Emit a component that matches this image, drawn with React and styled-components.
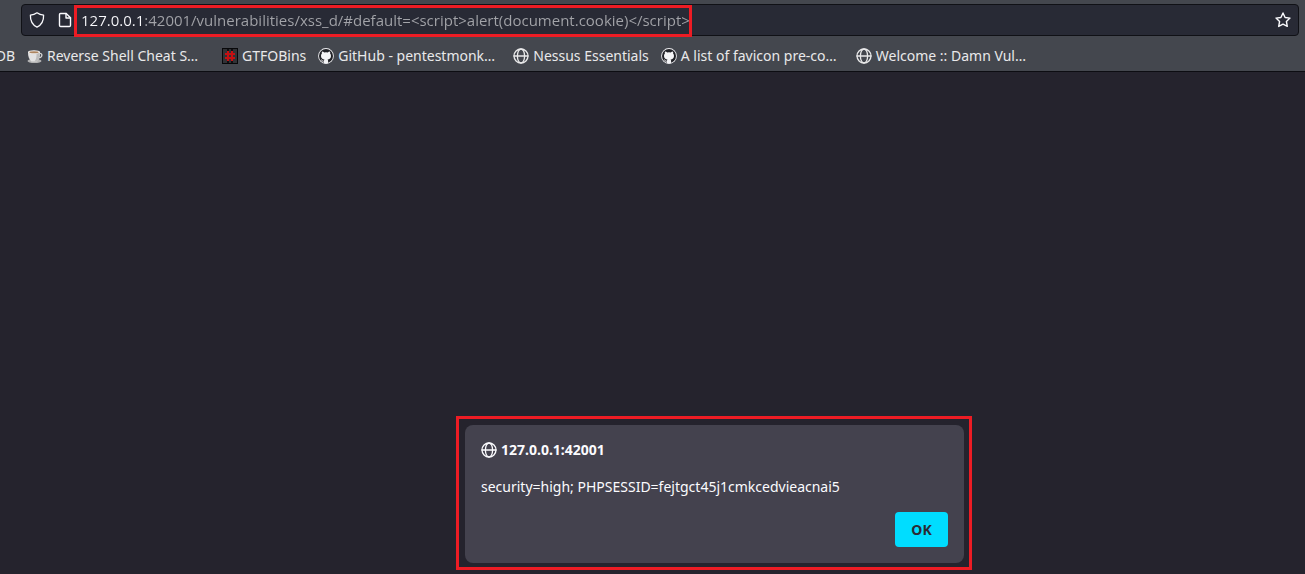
import React from "react";
import styled, { createGlobalStyle } from "styled-components";

const GlobalStyle = createGlobalStyle`
  * { box-sizing: border-box; }
  body {
    margin: 0;
    background: #25232d;
    font-family: "Noto Sans", "Open Sans", sans-serif;
    font-size: 14px;
    color: #fbfbfe;
  }
`;

const Page = styled.div`
  display: flex;
  flex-direction: column;
  min-height: 100vh;
`;

const Chrome = styled.header`
  background: #44474e;
  border-bottom: 1px solid #0d0d12;
  color: #e9e9ea;
`;

const NavBar = styled.div`
  display: flex;
  padding: 4px 6px 4px 21px;
`;

const AddressField = styled.div`
  flex: 1;
  display: flex;
  align-items: center;
  height: 32px;
  padding: 0 7px;
  background: #282a35;
  border: 1px solid #101116;
  border-radius: 4px;
`;

const IconButton = styled.button`
  display: flex;
  padding: 0;
  border: 0;
  background: none;
  color: #fbfbfe;
`;

const SiteButtons = styled.div`
  display: flex;
  gap: 12px;
  padding-right: 1px;
`;

const UrlBox = styled.div`
  position: relative;
  flex: 1;
  display: flex;
`;

const UrlInput = styled.input`
  flex: 1;
  min-width: 0;
  height: 24px;
  padding: 0 0 0 7px;
  border: 0;
  outline: 0;
  font-family: "Open Sans", "Noto Sans", sans-serif;
  font-size: 15px;
  color: transparent;
  background: linear-gradient(to right, #fbfbfe 70px, #a3a4a9 70px);
  background-clip: text;
  -webkit-background-clip: text;
`;

const UrlHighlight = styled.div`
  position: absolute;
  left: 0;
  top: -3px;
  width: 618px;
  height: 32px;
  border: 3px solid #ed1c24;
  pointer-events: none;
`;

const BookmarkBar = styled.nav`
  display: flex;
  gap: 12px;
  height: 31px;
  align-items: center;
  overflow: hidden;
`;

const Bookmark = styled.a`
  display: flex;
  flex: none;
  align-items: center;
  gap: 4px;
  color: inherit;
  text-decoration: none;
  white-space: nowrap;
`;

const ClippedBookmark = styled(Bookmark)`
  width: 15px;
  justify-content: flex-end;
`;

const BookmarkLabel = styled.span`
  width: ${(p) => (p.$full ? "163px" : "auto")};
  line-height: 20px;
`;

const Content = styled.main`
  flex: 1;
  display: flex;
  align-items: flex-end;
  justify-content: center;
  padding: 0 0 4px 123px;
`;

const DialogHighlight = styled.div`
  width: 516px;
  padding: 6px 5px 4px 6px;
  border: 3px solid #ed1c24;
`;

const Dialog = styled.section`
  padding: 16px;
  border-radius: 8px;
  background: #44424e;
`;

const DialogTitle = styled.h1`
  display: flex;
  align-items: center;
  gap: 4px;
  margin: 0;
  font-size: 14px;
  line-height: 18px;
  font-weight: 700;
`;

const DialogText = styled.p`
  margin: 18px 0 15px;
  line-height: 20px;
`;

const DialogActions = styled.div`
  display: flex;
  justify-content: flex-end;
`;

const PrimaryButton = styled.button`
  width: 53px;
  height: 35px;
  padding: 0;
  border: 0;
  border-radius: 4px;
  background: #00ddff;
  color: #2b2a33;
  font: inherit;
  font-weight: 700;
`;

const Svg = styled.svg.attrs({ width: 16, height: 16, viewBox: "0 0 16 16", "aria-hidden": true })`
  flex: none;
  display: block;
`;

const line = { fill: "none", stroke: "currentColor", strokeWidth: 1.3, strokeLinejoin: "round", strokeLinecap: "round" };

const ShieldIcon = () => (
  <Svg {...line}>
    <path d="M8 .8c2 1.4 4.100 2.100 6.600 2.300.2 5.500-1.600 9.700-6.600 12.100C3 12.800 1.200 8.600 1.400 3.100 3.900 2.900 6 2.200 8 .8z" />
  </Svg>
);

const FileIcon = () => (
  <Svg {...line} strokeWidth={1.4}>
    <path d="M3.500 1.500h5.700l4.300 4.300v7.500c0 .7-.5 1.200-1.200 1.200H3.700c-.7 0-1.200-.5-1.200-1.200V2.500c0-.6.4-1 1-1z" />
    <path d="M9 1.500v4.500h4.500" />
  </Svg>
);

const StarIcon = () => (
  <Svg {...line} strokeWidth={1.4}>
    <path d="M8 1l2.100 4.500 4.900.6-3.600 3.400.9 4.900L8 12.100l-4.300 2.300.9-4.900L1 6.100l4.900-.6z" />
  </Svg>
);

const GlobeIcon = () => (
  <Svg {...line} strokeWidth={1.3}>
    <circle cx="8" cy="8" r="7" />
    <ellipse cx="8" cy="8" rx="3.600" ry="7" />
    <path d="M1 8h14" />
  </Svg>
);

const CupIcon = () => (
  <Svg>
    <ellipse cx="7.500" cy="13" rx="7" ry="2" fill="#b4b4b4" />
    <path d="M12 5.500c4-1.200 4 4.500-.8 4.300" fill="none" stroke="#d5d5d5" strokeWidth="1.300" />
    <path d="M1 4h12c.2 4-.8 7.500-3 9.500H4.500C2 11.500.9 8 1 4z" fill="#e2e2e2" />
    <path d="M9.500 5h3.300c0 3.800-.8 6.700-2.800 8.500H7.500c1.800-2 2.200-5 2-8.500z" fill="#bdbdbd" />
    <ellipse cx="7" cy="4" rx="6" ry="1.800" fill="#f2f2f2" />
    <ellipse cx="7" cy="4.200" rx="4.700" ry="1" fill="#ad8560" />
  </Svg>
);

const GridIcon = () => (
  <Svg>
    <path d="M0 0h16v16H0z" fill="#08080a" />
    <path d="M1 1h14v14H1z" fill="#313236" />
    <path d="M6 1v14M10 1v14" stroke="#101013" strokeWidth="2" fill="none" />
    <path d="M6 3v10M10 3v10M3 6h10M3 10h10" stroke="#c50f12" strokeWidth="2" fill="none" />
  </Svg>
);

const GithubIcon = () => (
  <Svg>
    <circle cx="8" cy="8" r="7.900" fill="#ececef" />
    <circle cx="8" cy="8" r="7" fill="#202126" />
    <path
      d="M4 3.500c.9 0 1.700.4 2.300.9a7 7 0 0 1 3.400 0c.6-.5 1.400-.9 2.300-.9.3.8.3 1.500.1 2.100.6.7.9 1.400.9 2.300 0 2.400-1.500 3.300-3.400 3.500.4.4.5.9.5 1.500v2.300H5.900v-1.700c-1.700.3-2.100-.6-2.500-1.200-.2-.4-.5-.6-.7-.8.9-.3 1.400.4 1.900 1 .4.400.9.400 1.400.2 0-.5.2-.9.5-1.200C4.500 11.200 3 10.300 3 7.900c0-.9.3-1.600.9-2.300-.2-.6-.2-1.300.1-2.100z"
      fill="#f4f4f6"
    />
  </Svg>
);

const bookmarks = [
  { label: "Reverse Shell Cheat S…", Icon: CupIcon, full: true },
  { label: "GTFOBins", Icon: GridIcon },
  { label: "GitHub - pentestmonk…", Icon: GithubIcon, full: true },
  { label: "Nessus Essentials", Icon: GlobeIcon },
  { label: "A list of favicon pre-co…", Icon: GithubIcon, full: true },
  { label: "Welcome :: Damn Vul…", Icon: GlobeIcon, full: true },
];

export default function App() {
  return (
    <Page>
      <GlobalStyle />
      <Chrome>
        <NavBar>
          <AddressField>
            <SiteButtons>
              <IconButton aria-label="Tracking protection"><ShieldIcon /></IconButton>
              <IconButton aria-label="Site information"><FileIcon /></IconButton>
            </SiteButtons>
            <UrlBox>
              <UrlInput
                aria-label="Address"
                spellCheck={false}
                defaultValue="127.0.0.1:42001/vulnerabilities/xss_d/#default=<script>alert(document.cookie)</script>"
              />
              <UrlHighlight />
            </UrlBox>
            <IconButton aria-label="Bookmark this page"><StarIcon /></IconButton>
          </AddressField>
        </NavBar>
        <BookmarkBar aria-label="Bookmarks">
          <ClippedBookmark href="#db">DB</ClippedBookmark>
          {bookmarks.map(({ label, Icon, full }) => (
            <Bookmark key={label} href="#bookmark">
              <Icon />
              <BookmarkLabel $full={full}>{label}</BookmarkLabel>
            </Bookmark>
          ))}
        </BookmarkBar>
      </Chrome>
      <Content>
        <DialogHighlight>
          <Dialog role="dialog" aria-labelledby="dialog-title">
            <DialogTitle id="dialog-title"><GlobeIcon />127.0.0.1:42001</DialogTitle>
            <DialogText>security=high; PHPSESSID=fejtgct45j1cmkcedvieacnai5</DialogText>
            <DialogActions>
              <PrimaryButton>OK</PrimaryButton>
            </DialogActions>
          </Dialog>
        </DialogHighlight>
      </Content>
    </Page>
  );
}
